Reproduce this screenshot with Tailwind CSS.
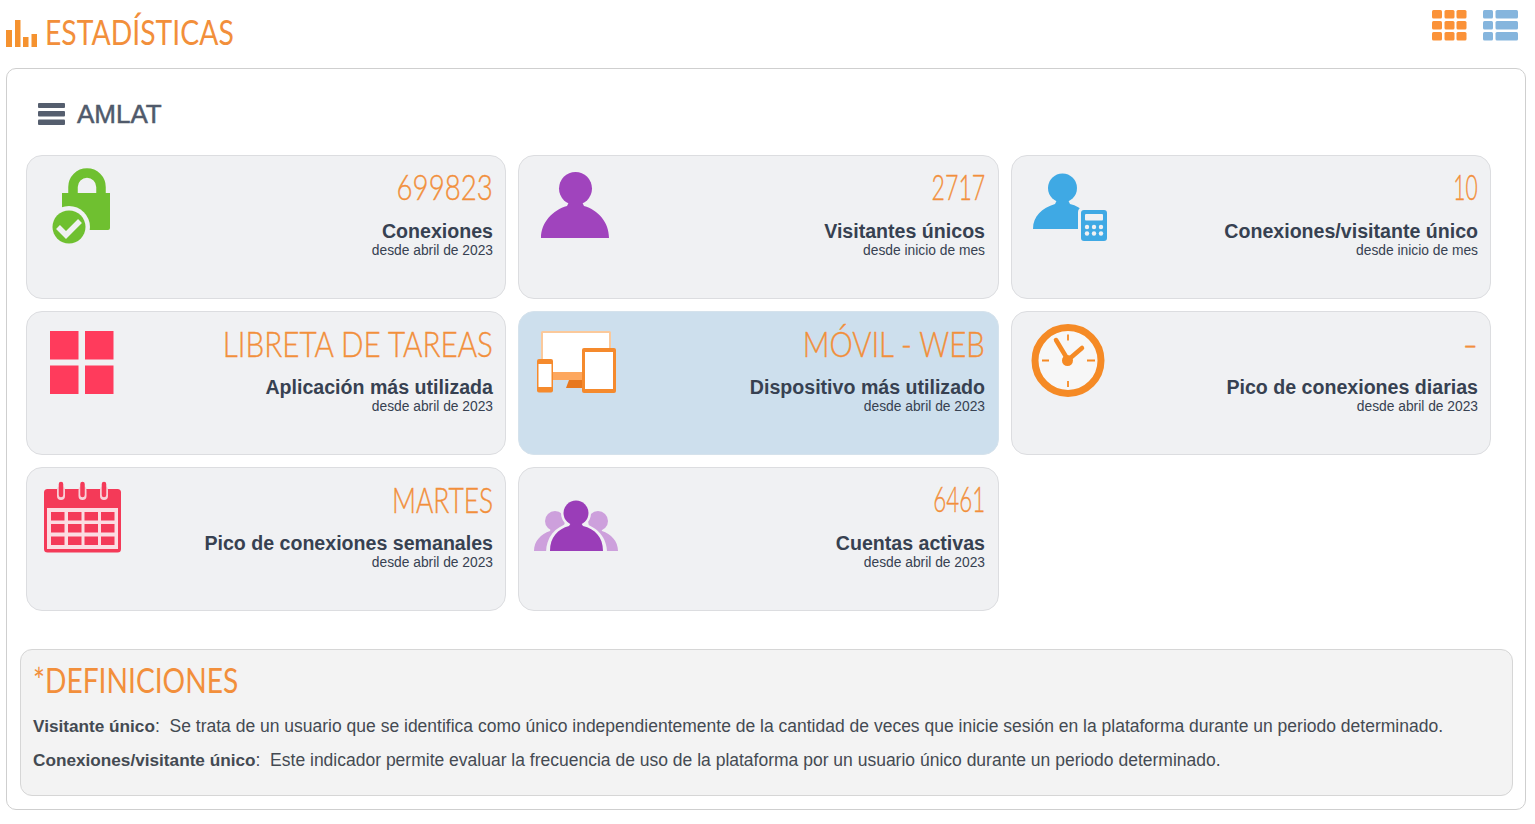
<!doctype html>
<html lang="es">
  <head>
    <meta charset="UTF-8">
    <title>Estadísticas</title>
    <script src="https://cdn.jsdelivr.net/npm/@tailwindcss/browser@4"></script>
  </head>
  <body class="bg-white font-['Liberation_Sans',Arial,sans-serif] text-[#374151]">
    <div class="h-[824px] w-[1535px] overflow-hidden">
      <!-- header -->
      <div class="flex h-[68px] items-start justify-between pl-[6px] pr-[17px]">
        <div class="flex items-start gap-[8px] pt-[13px]">
          <svg class="mt-[4px] h-[30px] w-[31px]" viewBox="6 14 31 30" fill="#f5922f">
            <rect x="6" y="27" width="6" height="17"/>
            <rect x="15" y="17" width="5.5" height="27"/>
            <rect x="23" y="34" width="5.5" height="10"/>
            <rect x="31.5" y="31" width="5.5" height="13"/>
          </svg>
          <span class="inline-block origin-left scale-x-[0.81] whitespace-nowrap font-['Lato',sans-serif] text-[35px] leading-[36px] font-normal text-[#f28f3b]">ESTADÍSTICAS</span>
        </div>
        <div class="flex gap-[16px] pt-[10px]">
          <svg class="h-[31px] w-[35px]" viewBox="1432 10 35 31" fill="#fb9238">
            <rect x="1432" y="10" width="10" height="8.5" rx="1.5"/><rect x="1444.5" y="10" width="10" height="8.5" rx="1.5"/><rect x="1456.5" y="10" width="10" height="8.5" rx="1.5"/>
            <rect x="1432" y="21" width="10" height="8.5" rx="1.5"/><rect x="1444.5" y="21" width="10" height="8.5" rx="1.5"/><rect x="1456.5" y="21" width="10" height="8.5" rx="1.5"/>
            <rect x="1432" y="32" width="10" height="8.5" rx="1.5"/><rect x="1444.5" y="32" width="10" height="8.5" rx="1.5"/><rect x="1456.5" y="32" width="10" height="8.5" rx="1.5"/>
          </svg>
          <svg class="h-[31px] w-[35px]" viewBox="1483 10 35 31" fill="#85b5dd">
            <rect x="1483" y="10" width="10" height="8.5" rx="1.5"/><rect x="1495.5" y="10" width="22.5" height="8.5" rx="1.5"/>
            <rect x="1483" y="21" width="10" height="8.5" rx="1.5"/><rect x="1495.5" y="21" width="22.5" height="8.5" rx="1.5"/>
            <rect x="1483" y="32" width="10" height="8.5" rx="1.5"/><rect x="1495.5" y="32" width="22.5" height="8.5" rx="1.5"/>
          </svg>
        </div>
      </div>

      <!-- panel -->
      <div class="ml-[6px] h-[742px] w-[1520px] rounded-[10px] border border-[#cfcfcf] pt-[28px]">
        <div class="flex h-[34px] items-center gap-[12px] pl-[31px]">
          <svg class="h-[22px] w-[27px]" viewBox="38 103 27 22" fill="#555e6e">
            <rect x="38" y="103" width="27" height="5" rx="1"/><rect x="38" y="111" width="27" height="5.5" rx="1"/><rect x="38" y="119.5" width="27" height="5.5" rx="1"/>
          </svg>
          <span class="text-[26px] leading-[34px] text-[#505a6b] [-webkit-text-stroke:0.5px_#505a6b]">AMLAT</span>
        </div>

        <div class="mt-[24px] ml-[19px] grid w-[1465px] grid-cols-[480px_481px_480px] grid-rows-[144px_144px_144px] gap-x-[12px] gap-y-[12px]">

          <div class="flex justify-between rounded-[16px] border border-[#dcdde0] bg-[#f0f1f3] pt-[7px] pr-[12px] pl-[9px]">
            <svg class="h-[100px] w-[100px]" viewBox="36 163 100 100">
              <path d="M73 195v-8a14 14 0 0 1 28 0v8" fill="none" stroke="#6fc030" stroke-width="9.5"/>
              <path d="M62 193h48v35a2 2 0 0 1-2 2H62z" fill="#6fc030"/>
              <circle cx="69" cy="227" r="21" fill="#f0f1f3"/>
              <circle cx="69" cy="227" r="16.5" fill="#6fc030"/>
              <path d="M58 227l8 8 14-14" fill="none" stroke="#f0f1f3" stroke-width="5.5"/>
            </svg>
            <div class="text-right">
              <div class="inline-block h-[46px] origin-right scale-x-[0.79] whitespace-nowrap font-['Lato',sans-serif] text-[35px] leading-[46px] font-light text-[#f28f3b] [-webkit-text-stroke:0.4px_#f28f3b]">699823</div>
              <div class="mt-[11px] whitespace-nowrap text-[19.6px] leading-[23px] font-bold">Conexiones</div>
              <div class="whitespace-nowrap text-[13.8px] leading-[16px]">desde abril de 2023</div>
            </div>
          </div>

          <div class="flex justify-between rounded-[16px] border border-[#dcdde0] bg-[#f0f1f3] pt-[7px] pr-[13px] pl-[9px]">
            <svg class="h-[100px] w-[100px]" viewBox="528 163 100 100" fill="#a044bd">
              <circle cx="575.5" cy="188.5" r="16.5"/>
              <path d="M541 238c0-16 12-28 26-32l2-4h13l2 4c14 4 25 16 25 32z"/>
            </svg>
            <div class="text-right">
              <div class="inline-block h-[46px] origin-right scale-x-[0.66] whitespace-nowrap font-['Lato',sans-serif] text-[35px] leading-[46px] font-light text-[#f28f3b] [-webkit-text-stroke:0.4px_#f28f3b]">2717</div>
              <div class="mt-[11px] whitespace-nowrap text-[19.6px] leading-[23px] font-bold">Visitantes únicos</div>
              <div class="whitespace-nowrap text-[13.8px] leading-[16px]">desde inicio de mes</div>
            </div>
          </div>

          <div class="flex justify-between rounded-[16px] border border-[#dcdde0] bg-[#f0f1f3] pt-[7px] pr-[12px] pl-[9px]">
            <svg class="h-[100px] w-[100px]" viewBox="1021 163 100 100">
              <circle cx="1062.5" cy="188" r="14.5" fill="#3fa9e4"/>
              <path d="M1033 229c0-13 9-21 22-25l2-4h11l2 4c12 3 20 11 22 25z" fill="#3fa9e4"/>
              <rect x="1078" y="207" width="32" height="37" rx="5" fill="#f0f1f3"/>
              <rect x="1081" y="210" width="26" height="31" rx="3" fill="#3fa9e4"/>
              <rect x="1085" y="214" width="18" height="6.5" rx="1" fill="#f0f1f3"/>
              <g fill="#f0f1f3">
                <circle cx="1087" cy="227" r="2.2"/><circle cx="1094" cy="227" r="2.2"/><circle cx="1101" cy="227" r="2.2"/>
                <circle cx="1087" cy="233.5" r="2.2"/><circle cx="1094" cy="233.5" r="2.2"/><circle cx="1101" cy="233.5" r="2.2"/>
              </g>
            </svg>
            <div class="text-right">
              <div class="inline-block h-[46px] origin-right scale-x-[0.6] whitespace-nowrap font-['Lato',sans-serif] text-[35px] leading-[46px] font-light text-[#f28f3b] [-webkit-text-stroke:0.4px_#f28f3b]">10</div>
              <div class="mt-[11px] whitespace-nowrap text-[19.6px] leading-[23px] font-bold">Conexiones/visitante único</div>
              <div class="whitespace-nowrap text-[13.8px] leading-[16px]">desde inicio de mes</div>
            </div>
          </div>

          <div class="flex justify-between rounded-[16px] border border-[#dcdde0] bg-[#f0f1f3] pt-[7px] pr-[12px] pl-[9px]">
            <svg class="h-[100px] w-[100px]" viewBox="36 319 100 100" fill="#ff3b5c">
              <rect x="50" y="331" width="28.5" height="28.5"/><rect x="85" y="331" width="28.5" height="28.5"/>
              <rect x="50" y="365.5" width="28.5" height="28.5"/><rect x="85" y="365.5" width="28.5" height="28.5"/>
            </svg>
            <div class="text-right">
              <div class="inline-block h-[46px] origin-right scale-x-[0.847] whitespace-nowrap font-['Lato',sans-serif] text-[35px] leading-[48px] font-light text-[#f28f3b] [-webkit-text-stroke:0.4px_#f28f3b]">LIBRETA DE TAREAS</div>
              <div class="mt-[11px] whitespace-nowrap text-[19.6px] leading-[23px] font-bold">Aplicación más utilizada</div>
              <div class="whitespace-nowrap text-[13.8px] leading-[16px]">desde abril de 2023</div>
            </div>
          </div>

          <div class="flex justify-between rounded-[16px] border border-[#d5e2ec] bg-[#cddfed] pt-[7px] pr-[13px] pl-[9px]">
            <svg class="h-[100px] w-[100px]" viewBox="528 319 100 100">
              <rect x="541" y="331" width="70" height="49" rx="1.5" fill="#fbc99b"/>
              <rect x="543" y="333" width="66" height="39" fill="#fff"/>
              <rect x="543" y="372" width="66" height="8" fill="#fda75e"/>
              <path d="M569 380h14v8h-17z" fill="#e8781e"/>
              <rect x="537" y="359" width="16" height="33.5" rx="2" fill="#f58a2d"/>
              <rect x="538.5" y="364" width="13" height="23" fill="#fff"/>
              <rect x="582" y="348" width="34" height="45" rx="2" fill="#f58a2d"/>
              <rect x="585" y="352" width="28" height="37" fill="#fff"/>
            </svg>
            <div class="text-right">
              <div class="inline-block h-[46px] origin-right scale-x-[0.84] whitespace-nowrap font-['Lato',sans-serif] text-[35px] leading-[48px] font-light text-[#f28f3b] [-webkit-text-stroke:0.4px_#f28f3b]">MÓVIL - WEB</div>
              <div class="mt-[11px] whitespace-nowrap text-[19.6px] leading-[23px] font-bold">Dispositivo más utilizado</div>
              <div class="whitespace-nowrap text-[13.8px] leading-[16px]">desde abril de 2023</div>
            </div>
          </div>

          <div class="flex justify-between rounded-[16px] border border-[#dcdde0] bg-[#f0f1f3] pt-[7px] pr-[12px] pl-[9px]">
            <svg class="h-[100px] w-[100px]" viewBox="1021 319 100 100">
              <circle cx="1068" cy="360.5" r="33" fill="#f7f7f7" stroke="#f58a25" stroke-width="7"/>
              <path d="M1068 334.5v6M1068 381v6M1042 360.5h7M1087 360.5h8" stroke="#f58a25" stroke-width="1.8" fill="none"/>
              <path d="M1056 340l12 20 14-12" stroke="#f58a25" stroke-width="4.5" stroke-linecap="round" stroke-linejoin="round" fill="none"/>
              <circle cx="1067.5" cy="360.5" r="5.5" fill="#f58a25"/>
            </svg>
            <div class="text-right">
              <div class="inline-block h-[46px] origin-right scale-x-[1.2] whitespace-nowrap font-['Lato',sans-serif] text-[35px] leading-[48px] font-light text-[#f28f3b] [-webkit-text-stroke:0.4px_#f28f3b]">-</div>
              <div class="mt-[11px] whitespace-nowrap text-[19.6px] leading-[23px] font-bold">Pico de conexiones diarias</div>
              <div class="whitespace-nowrap text-[13.8px] leading-[16px]">desde abril de 2023</div>
            </div>
          </div>

          <div class="flex justify-between rounded-[16px] border border-[#dcdde0] bg-[#f0f1f3] pt-[7px] pr-[12px] pl-[9px]">
            <svg class="h-[100px] w-[100px]" viewBox="36 475 100 100">
              <rect x="44" y="489" width="77" height="63.5" rx="3.5" fill="#f43a58"/>
              <rect x="47" y="508" width="71" height="41" fill="#fbdde2"/>
              <g fill="#f43a58">
                <rect x="51" y="512" width="13.5" height="8.5"/><rect x="68" y="512" width="13.5" height="8.5"/><rect x="84.5" y="512" width="13.5" height="8.5"/><rect x="101" y="512" width="13.5" height="8.5"/>
                <rect x="51" y="524" width="13.5" height="8.5"/><rect x="68" y="524" width="13.5" height="8.5"/><rect x="84.5" y="524" width="13.5" height="8.5"/><rect x="101" y="524" width="13.5" height="8.5"/>
                <rect x="51" y="536.5" width="13.5" height="8.5"/><rect x="68" y="536.5" width="13.5" height="8.5"/><rect x="84.5" y="536.5" width="13.5" height="8.5"/><rect x="101" y="536.5" width="13.5" height="8.5"/>
              </g>
              <path d="M61 490v6M82.5 490v6M104 490v6" stroke="#f9cfd7" stroke-width="8" stroke-linecap="round" fill="none"/>
              <path d="M61 484v11M82.5 484v11M104 484v11" stroke="#f43a58" stroke-width="4.5" stroke-linecap="round" fill="none"/>
            </svg>
            <div class="text-right">
              <div class="inline-block h-[46px] origin-right scale-x-[0.755] whitespace-nowrap font-['Lato',sans-serif] text-[35px] leading-[48px] font-light text-[#f28f3b] [-webkit-text-stroke:0.4px_#f28f3b]">MARTES</div>
              <div class="mt-[11px] whitespace-nowrap text-[19.6px] leading-[23px] font-bold">Pico de conexiones semanales</div>
              <div class="whitespace-nowrap text-[13.8px] leading-[16px]">desde abril de 2023</div>
            </div>
          </div>

          <div class="flex justify-between rounded-[16px] border border-[#dcdde0] bg-[#f0f1f3] pt-[7px] pr-[13px] pl-[9px]">
            <svg class="h-[100px] w-[100px]" viewBox="528 475 100 100">
              <g fill="#cda0dc">
                <circle cx="555" cy="521" r="10"/><circle cx="598" cy="521" r="10"/>
                <path d="M534 551c0-10 7-17 16-20l1-3h8l1 3c8 3 12 10 12 20z"/>
                <path d="M618 551c0-10-7-17-16-20l-1-3h-8l-1 3c-8 3-12 10-12 20z"/>
              </g>
              <circle cx="576" cy="513" r="15" fill="#f0f1f3"/>
              <path d="M546 553c0-16 9-26 23-30h14c14 4 24 14 24 30z" fill="#f0f1f3"/>
              <circle cx="576" cy="513" r="12.5" fill="#9a3db8"/>
              <path d="M550 551c0-14 8-22 19-25l2-3h10l2 3c12 3 20 11 20 25z" fill="#9a3db8"/>
            </svg>
            <div class="text-right">
              <div class="inline-block h-[46px] origin-right scale-x-[0.64] whitespace-nowrap font-['Lato',sans-serif] text-[35px] leading-[46px] font-light text-[#f28f3b] [-webkit-text-stroke:0.4px_#f28f3b]">6461</div>
              <div class="mt-[11px] whitespace-nowrap text-[19.6px] leading-[23px] font-bold">Cuentas activas</div>
              <div class="whitespace-nowrap text-[13.8px] leading-[16px]">desde abril de 2023</div>
            </div>
          </div>
        </div>

        <!-- definiciones -->
        <div class="mt-[38px] ml-[13px] h-[147px] w-[1493px] rounded-[12px] border border-[#d6d6d6] bg-[#f3f3f3] pt-[11px] pl-[12px]">
          <div class="inline-block origin-left scale-x-[0.805] whitespace-nowrap font-['Lato',sans-serif] text-[35px] leading-[36px] text-[#f28f3b]">*DEFINICIONES</div>
          <p class="mt-[9px] whitespace-nowrap text-[17.5px] leading-[34px] text-[#444a52]"><b class="text-[17.2px]">Visitante único</b>:&nbsp; Se trata de un usuario que se identifica como único independientemente de la cantidad de veces que inicie sesión en la plataforma durante un periodo determinado.</p>
          <p class="whitespace-nowrap text-[17.5px] leading-[34px] text-[#444a52]"><b class="text-[17.2px]">Conexiones/visitante único</b>:&nbsp; Este indicador permite evaluar la frecuencia de uso de la plataforma por un usuario único durante un periodo determinado.</p>
        </div>
      </div>
    </div>
  </body>
</html>
